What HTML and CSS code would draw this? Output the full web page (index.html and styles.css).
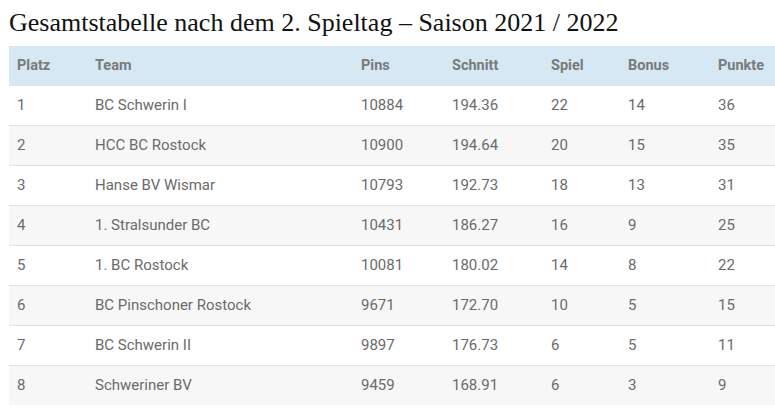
FILE: index.html
```html
<!DOCTYPE html>
<html lang="de">
<head>
<meta charset="utf-8">
<link rel="stylesheet" href="styles.css">
</head>
<body>
<div class="page">
  <h2 class="title">Gesamtstabelle nach dem 2. Spieltag – Saison 2021 / 2022</h2>
  <table class="standings">
    <colgroup>
      <col class="c-platz"><col class="c-team"><col class="c-pins"><col class="c-schnitt"><col class="c-spiel"><col class="c-bonus"><col class="c-punkte">
    </colgroup>
    <thead>
      <tr><th>Platz</th><th>Team</th><th>Pins</th><th>Schnitt</th><th>Spiel</th><th>Bonus</th><th>Punkte</th></tr>
    </thead>
    <tbody>
      <tr><td>1</td><td>BC Schwerin I</td><td>10884</td><td>194.36</td><td>22</td><td>14</td><td>36</td></tr>
      <tr><td>2</td><td>HCC BC Rostock</td><td>10900</td><td>194.64</td><td>20</td><td>15</td><td>35</td></tr>
      <tr><td>3</td><td>Hanse BV Wismar</td><td>10793</td><td>192.73</td><td>18</td><td>13</td><td>31</td></tr>
      <tr><td>4</td><td>1. Stralsunder BC</td><td>10431</td><td>186.27</td><td>16</td><td>9</td><td>25</td></tr>
      <tr><td>5</td><td>1. BC Rostock</td><td>10081</td><td>180.02</td><td>14</td><td>8</td><td>22</td></tr>
      <tr><td>6</td><td>BC Pinschoner Rostock</td><td>9671</td><td>172.70</td><td>10</td><td>5</td><td>15</td></tr>
      <tr><td>7</td><td>BC Schwerin II</td><td>9897</td><td>176.73</td><td>6</td><td>5</td><td>11</td></tr>
      <tr><td>8</td><td>Schweriner BV</td><td>9459</td><td>168.91</td><td>6</td><td>3</td><td>9</td></tr>
    </tbody>
  </table>
</div>
</body>
</html>
```
FILE: styles.css
```css
html, body {
  margin: 0;
  padding: 0;
  background: #ffffff;
}
.page {
  padding: 9px 0 0 9px;
}
.title {
  margin: 0 0 9px 0;
  font-family: "Liberation Serif", "DejaVu Serif", serif;
  font-weight: normal;
  font-size: 26px;
  line-height: 28px;
  color: #111111;
}
.standings {
  width: 766px;
  border-collapse: collapse;
  table-layout: fixed;
  font-family: Roboto, "Liberation Sans", sans-serif;
}
.c-platz { width: 78px; }
.c-team { width: 266px; }
.c-pins { width: 91px; }
.c-schnitt { width: 99px; }
.c-spiel { width: 77px; }
.c-bonus { width: 90px; }
.c-punkte { width: 65px; }
.standings th {
  background: #d5e8f4;
  color: #7a7a7a;
  font-size: 14.5px;
  font-weight: bold;
  text-align: left;
  padding: 10px 8px;
  line-height: 19px;
  height: 19px;
}
.standings td {
  color: #6b6b6b;
  font-size: 15px;
  text-align: left;
  padding: 10px 8px;
  line-height: 19px;
  height: 19px;
  border-top: 1px solid #e2e2e2;
}
.standings tbody tr:nth-child(even) td {
  background: #f7f7f7;
}
```
